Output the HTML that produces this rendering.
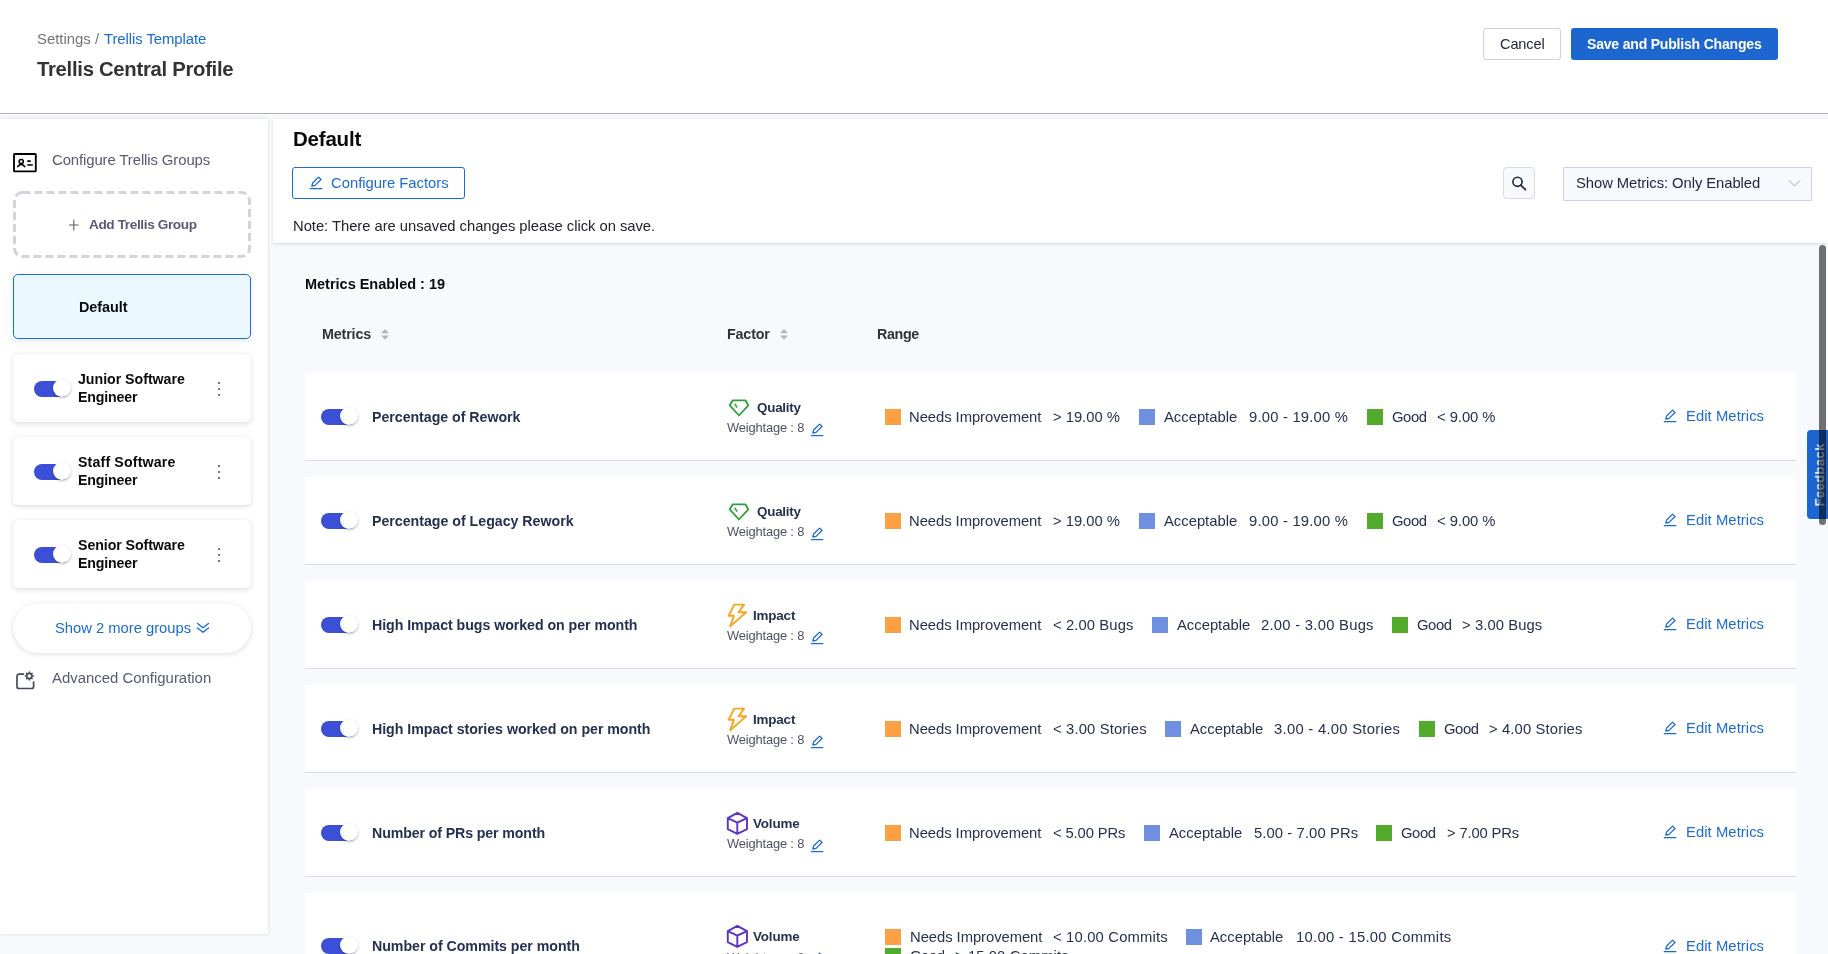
<!DOCTYPE html>
<html><head><meta charset="utf-8">
<style>
*{box-sizing:border-box;margin:0;padding:0}
html,body{width:1828px;height:954px;overflow:hidden;background:#f8f9fc;font-family:"Liberation Sans",sans-serif}
.t{position:absolute;white-space:nowrap;will-change:transform}
.tog{position:absolute;width:36px;height:16px;border-radius:8px;background:#3c4fd7}
.tog::after{content:"";position:absolute;left:18.5px;top:-2px;width:18px;height:18px;border-radius:50%;background:#fff;box-shadow:0 1px 2.5px rgba(0,0,0,.28)}
</style></head><body>
<div style="position:absolute;left:0;top:0;width:1828px;height:113px;background:#fff"></div>
<div style="position:absolute;left:0;top:113px;width:1828px;height:1px;background:#b3b3b3"></div>
<div class="t" style="left:36.6px;top:32.00px;font-size:14.9px;line-height:14.9px;color:#747474;">Settings / </div>
<div class="t" style="left:104.0px;top:32.00px;font-size:14.9px;line-height:14.9px;color:#1a6bd3;letter-spacing:-0.076px;">Trellis Template</div>
<div class="t" style="left:36.9px;top:59.00px;font-size:20.3px;line-height:20.3px;color:#333333;font-weight:bold;letter-spacing:-0.286px;">Trellis Central Profile</div>
<div style="position:absolute;left:1483px;top:28px;width:78px;height:32px;border:1px solid #d0d1da;border-radius:3px;background:#fff"></div>
<div class="t" style="left:1499.8px;top:37.00px;font-size:14.6px;line-height:14.6px;color:#22283d;letter-spacing:-0.141px;">Cancel</div>
<div style="position:absolute;left:1571px;top:28px;width:207px;height:32px;border-radius:3px;background:#1e66cf"></div>
<div class="t" style="left:1587.0px;top:37.00px;font-size:14.0px;line-height:14.0px;color:#fff;font-weight:bold;letter-spacing:-0.185px;">Save and Publish Changes</div>
<div style="position:absolute;left:0;top:119px;width:268px;height:815px;background:#fff;box-shadow:0 0 3px rgba(96,97,112,.22)"></div>
<svg style="position:absolute;left:12px;top:152px" width="26" height="22" viewBox="0 0 26 22"><rect x="2" y="2" width="21.8" height="17.3" rx="0.6" fill="none" stroke="#000" stroke-width="1.85"/><circle cx="9.2" cy="9.5" r="2.1" fill="none" stroke="#000" stroke-width="1.5"/><path d="M5.7 14.6 Q9.2 10.3 12.7 14.6" fill="none" stroke="#000" stroke-width="1.6" stroke-linecap="round"/><path d="M15.3 9.1h3.4M15.3 13h5.5" stroke="#000" stroke-width="1.6"/></svg>
<div class="t" style="left:51.5px;top:153.00px;font-size:14.9px;line-height:14.9px;color:#585a76;letter-spacing:-0.103px;">Configure Trellis Groups</div>
<svg style="position:absolute;left:13px;top:191px" width="238" height="67" viewBox="0 0 238 67"><rect x="1.5" y="1.5" width="235" height="64" rx="8" fill="none" stroke="#d3d5dd" stroke-width="3" stroke-dasharray="8 4"/></svg>
<svg style="position:absolute;left:69px;top:219px" width="10" height="12" viewBox="0 0 10 12"><path d="M4.8 0.5v11M0 6h9.5" stroke="#5a5c75" stroke-width="1.1"/></svg>
<div class="t" style="left:88.6px;top:218.00px;font-size:13.6px;line-height:13.6px;color:#585a76;font-weight:bold;letter-spacing:-0.376px;">Add Trellis Group</div>
<div style="position:absolute;left:13px;top:274px;width:238px;height:65px;background:#ebf8fe;border:1px solid #1e6fd0;border-radius:5px;box-shadow:0 1.5px 5px rgba(96,97,112,.16)"></div>
<div class="t" style="left:78.5px;top:300.00px;font-size:14.4px;line-height:14.4px;color:#0b0b0d;font-weight:bold;letter-spacing:-0.044px;">Default</div>
<div style="position:absolute;left:13px;top:354px;width:238px;height:68px;background:#fff;border-radius:5px;box-shadow:0 0 1px rgba(40,41,61,.08),0 1.5px 5px rgba(96,97,112,.18)"></div>
<div class="tog" style="left:34px;top:381px"></div>
<div class="t" style="left:77.5px;top:372.00px;font-size:14.2px;line-height:14.2px;color:#0b0b0d;font-weight:bold;letter-spacing:-0.027px;">Junior Software</div>
<div class="t" style="left:77.5px;top:390.00px;font-size:14.2px;line-height:14.2px;color:#0b0b0d;font-weight:bold;letter-spacing:-0.158px;">Engineer</div>
<div style="position:absolute;left:218px;top:382px;width:2px;height:2.2px;border-radius:1px;background:#3e4470"></div>
<div style="position:absolute;left:218px;top:388px;width:2px;height:2.2px;border-radius:1px;background:#3e4470"></div>
<div style="position:absolute;left:218px;top:394px;width:2px;height:2.2px;border-radius:1px;background:#3e4470"></div>
<div style="position:absolute;left:13px;top:437px;width:238px;height:68px;background:#fff;border-radius:5px;box-shadow:0 0 1px rgba(40,41,61,.08),0 1.5px 5px rgba(96,97,112,.18)"></div>
<div class="tog" style="left:34px;top:464px"></div>
<div class="t" style="left:77.5px;top:455.00px;font-size:14.2px;line-height:14.2px;color:#0b0b0d;font-weight:bold;letter-spacing:0.145px;">Staff Software</div>
<div class="t" style="left:77.5px;top:473.00px;font-size:14.2px;line-height:14.2px;color:#0b0b0d;font-weight:bold;letter-spacing:-0.158px;">Engineer</div>
<div style="position:absolute;left:218px;top:465px;width:2px;height:2.2px;border-radius:1px;background:#3e4470"></div>
<div style="position:absolute;left:218px;top:471px;width:2px;height:2.2px;border-radius:1px;background:#3e4470"></div>
<div style="position:absolute;left:218px;top:477px;width:2px;height:2.2px;border-radius:1px;background:#3e4470"></div>
<div style="position:absolute;left:13px;top:520px;width:238px;height:68px;background:#fff;border-radius:5px;box-shadow:0 0 1px rgba(40,41,61,.08),0 1.5px 5px rgba(96,97,112,.18)"></div>
<div class="tog" style="left:34px;top:547px"></div>
<div class="t" style="left:77.5px;top:538.00px;font-size:14.2px;line-height:14.2px;color:#0b0b0d;font-weight:bold;letter-spacing:-0.080px;">Senior Software</div>
<div class="t" style="left:77.5px;top:556.00px;font-size:14.2px;line-height:14.2px;color:#0b0b0d;font-weight:bold;letter-spacing:-0.158px;">Engineer</div>
<div style="position:absolute;left:218px;top:548px;width:2px;height:2.2px;border-radius:1px;background:#3e4470"></div>
<div style="position:absolute;left:218px;top:554px;width:2px;height:2.2px;border-radius:1px;background:#3e4470"></div>
<div style="position:absolute;left:218px;top:560px;width:2px;height:2.2px;border-radius:1px;background:#3e4470"></div>
<div style="position:absolute;left:13px;top:603px;width:238px;height:50px;background:#fff;border-radius:25px;box-shadow:0 0 1px rgba(40,41,61,.08),0 1.5px 5px rgba(96,97,112,.18)"></div>
<div class="t" style="left:54.5px;top:621.00px;font-size:14.8px;line-height:14.8px;color:#1a6bd3;letter-spacing:-0.026px;">Show 2 more groups</div>
<svg style="position:absolute;left:196px;top:622px" width="14" height="12" viewBox="0 0 14 12"><path d="M1.5 1.5l5.5 4.3 5.5-4.3M1.5 6l5.5 4.3 5.5-4.3" fill="none" stroke="#1a6bd3" stroke-width="1.4" stroke-linecap="round" stroke-linejoin="round"/></svg>
<svg style="position:absolute;left:15px;top:671px" width="21" height="19" viewBox="0 0 21 19"><path d="M8.5 3.2H4a2 2 0 0 0-2 2V15.5a2 2 0 0 0 2 2h12.6a2 2 0 0 0 2-2V11" fill="none" stroke="#474a5e" stroke-width="1.7" stroke-linecap="round"/><circle cx="14.3" cy="5" r="2.6" fill="none" stroke="#474a5e" stroke-width="1.6"/><path d="M14.3 1v1.2M14.3 7.8V9M10.3 5h1.2M17.1 5h1.2M11.5 2.2l.9.9M16.2 6.9l.9.9M11.5 7.8l.9-.9M16.2 3.1l.9-.9" stroke="#474a5e" stroke-width="1.4" stroke-linecap="round"/></svg>
<div class="t" style="left:51.5px;top:671.00px;font-size:14.9px;line-height:14.9px;color:#585a76;letter-spacing:0.012px;">Advanced Configuration</div>
<div style="position:absolute;left:273px;top:119px;width:1555px;height:124px;background:#fff;box-shadow:0 1px 3px rgba(96,97,112,.2)"></div>
<div class="t" style="left:292.6px;top:129.00px;font-size:20.5px;line-height:20.5px;color:#0b0b0d;font-weight:bold;letter-spacing:-0.212px;">Default</div>
<div style="position:absolute;left:292px;top:167px;width:173px;height:32px;border:1px solid #1a6bd3;border-radius:3px;background:#fff"></div>
<svg style="position:absolute;left:308.5px;top:176px" width="14" height="14" viewBox="0 0 14 14"><path d="M9.6 1.1L12 3.5 6 9.4 2.8 10.2 3.6 7z" fill="none" stroke="#1a6bd3" stroke-width="1.25" stroke-linejoin="round"/><path d="M1.2 12.5H12.8" stroke="#1a6bd3" stroke-width="1.25" stroke-linecap="round"/></svg>
<div class="t" style="left:331.0px;top:176.00px;font-size:14.8px;line-height:14.8px;color:#1a6bd3;">Configure Factors</div>
<div class="t" style="left:292.6px;top:219.00px;font-size:14.8px;line-height:14.8px;color:#22222a;letter-spacing:-0.038px;">Note: There are unsaved changes please click on save.</div>
<div style="position:absolute;left:1503px;top:167px;width:32px;height:32px;border:1px solid #d9dae5;border-radius:4px;background:#f8f9fc"></div>
<svg style="position:absolute;left:1510px;top:175px" width="18" height="16" viewBox="0 0 18 16"><circle cx="7.5" cy="6.8" r="4.6" fill="none" stroke="#22283d" stroke-width="1.6"/><path d="M10.8 10.1l4.6 4.6" stroke="#22283d" stroke-width="1.8" stroke-linecap="round"/></svg>
<div style="position:absolute;left:1563px;top:167px;width:249px;height:34px;border:1px solid #cdd0e0;border-radius:1px;background:#f8f9fe"></div>
<div class="t" style="left:1575.8px;top:176.00px;font-size:14.8px;line-height:14.8px;color:#22283d;letter-spacing:-0.066px;">Show Metrics: Only Enabled</div>
<svg style="position:absolute;left:1788px;top:179px" width="13" height="9" viewBox="0 0 13 9"><path d="M1.2 1.5l5.3 5.6 5.3-5.6" fill="none" stroke="#a3a8b8" stroke-width="1"/></svg>
<div class="t" style="left:305.0px;top:277.00px;font-size:14.5px;line-height:14.5px;color:#0b0b0d;font-weight:bold;letter-spacing:-0.011px;">Metrics Enabled : 19</div>
<div class="t" style="left:321.7px;top:327.00px;font-size:14.3px;line-height:14.3px;color:#333333;font-weight:bold;letter-spacing:-0.153px;">Metrics</div>
<svg style="position:absolute;left:380px;top:328px" width="10" height="13" viewBox="0 0 10 13"><path d="M1 5.3L5 1 9 5.3z M1 7.4L5 11.8 9 7.4z" fill="#b5b5b5"/></svg>
<div class="t" style="left:727.0px;top:327.00px;font-size:14.3px;line-height:14.3px;color:#333333;font-weight:bold;letter-spacing:-0.167px;">Factor</div>
<svg style="position:absolute;left:779px;top:328px" width="10" height="13" viewBox="0 0 10 13"><path d="M1 5.3L5 1 9 5.3z M1 7.4L5 11.8 9 7.4z" fill="#b5b5b5"/></svg>
<div class="t" style="left:877.1px;top:327.00px;font-size:14.3px;line-height:14.3px;color:#333333;font-weight:bold;letter-spacing:-0.361px;">Range</div>
<div style="position:absolute;left:305px;top:372.5px;width:1491px;height:88px;background:#fff;border-bottom:1px solid #d9dae5"></div>
<div class="tog" style="left:321px;top:409.0px"></div>
<div class="t" style="left:372.3px;top:410.00px;font-size:14.2px;line-height:14.2px;color:#263152;font-weight:bold;letter-spacing:-0.033px;">Percentage of Rework</div>
<svg style="position:absolute;left:726px;top:396.5px" width="26" height="22" viewBox="0 0 26 22"><path d="M6.8 3.3H19.4L22.3 8.3 13 18.5 3.7 8.3z" fill="none" stroke="#2ea23a" stroke-width="1.8" stroke-linejoin="round"/><path d="M9.1 7.4l1.6 2.6" stroke="#2ea23a" stroke-width="1.6" stroke-linecap="round"/></svg>
<div class="t" style="left:756.6px;top:401.00px;font-size:13.4px;line-height:13.4px;color:#263152;font-weight:bold;letter-spacing:-0.232px;">Quality</div>
<div class="t" style="left:727.3px;top:422.00px;font-size:12.9px;line-height:12.9px;color:#4f5165;letter-spacing:-0.167px;">Weightage : 8</div>
<svg style="position:absolute;left:810.3px;top:422.5px" width="14" height="14" viewBox="0 0 14 14"><path d="M9.6 1.1L12 3.5 6 9.4 2.8 10.2 3.6 7z" fill="none" stroke="#1a6bd3" stroke-width="1.25" stroke-linejoin="round"/><path d="M1.2 12.5H12.8" stroke="#1a6bd3" stroke-width="1.25" stroke-linecap="round"/></svg>
<div style="position:absolute;left:884.8px;top:409.2px;width:16px;height:16px;background:#fba043"></div>
<div class="t" style="left:909.4px;top:410.00px;font-size:14.8px;line-height:14.8px;color:#263152;letter-spacing:-0.051px;">Needs Improvement</div>
<div class="t" style="left:1053.3px;top:410.00px;font-size:14.8px;line-height:14.8px;color:#263152;letter-spacing:-0.029px;">> 19.00 %</div>
<div style="position:absolute;left:1139.1px;top:409.2px;width:16px;height:16px;background:#6f8fe0"></div>
<div class="t" style="left:1163.7px;top:410.00px;font-size:14.8px;line-height:14.8px;color:#263152;">Acceptable</div>
<div class="t" style="left:1248.7px;top:410.00px;font-size:14.8px;line-height:14.8px;color:#263152;letter-spacing:0.210px;">9.00 - 19.00 %</div>
<div style="position:absolute;left:1367.2px;top:409.2px;width:16px;height:16px;background:#52ab2a"></div>
<div class="t" style="left:1391.8px;top:410.00px;font-size:14.8px;line-height:14.8px;color:#263152;letter-spacing:-0.426px;">Good</div>
<div class="t" style="left:1437.2px;top:410.00px;font-size:14.8px;line-height:14.8px;color:#263152;letter-spacing:-0.054px;">< 9.00 %</div>
<svg style="position:absolute;left:1663px;top:409.0px" width="14" height="14" viewBox="0 0 14 14"><path d="M9.6 1.1L12 3.5 6 9.4 2.8 10.2 3.6 7z" fill="none" stroke="#1a6bd3" stroke-width="1.25" stroke-linejoin="round"/><path d="M1.2 12.5H12.8" stroke="#1a6bd3" stroke-width="1.25" stroke-linecap="round"/></svg>
<div class="t" style="left:1685.6px;top:409.00px;font-size:14.8px;line-height:14.8px;color:#1a6bd3;letter-spacing:0.066px;">Edit Metrics</div>
<div style="position:absolute;left:305px;top:476.5px;width:1491px;height:88px;background:#fff;border-bottom:1px solid #d9dae5"></div>
<div class="tog" style="left:321px;top:513.0px"></div>
<div class="t" style="left:372.3px;top:514.00px;font-size:14.2px;line-height:14.2px;color:#263152;font-weight:bold;letter-spacing:-0.012px;">Percentage of Legacy Rework</div>
<svg style="position:absolute;left:726px;top:500.5px" width="26" height="22" viewBox="0 0 26 22"><path d="M6.8 3.3H19.4L22.3 8.3 13 18.5 3.7 8.3z" fill="none" stroke="#2ea23a" stroke-width="1.8" stroke-linejoin="round"/><path d="M9.1 7.4l1.6 2.6" stroke="#2ea23a" stroke-width="1.6" stroke-linecap="round"/></svg>
<div class="t" style="left:756.6px;top:505.00px;font-size:13.4px;line-height:13.4px;color:#263152;font-weight:bold;letter-spacing:-0.232px;">Quality</div>
<div class="t" style="left:727.3px;top:526.00px;font-size:12.9px;line-height:12.9px;color:#4f5165;letter-spacing:-0.167px;">Weightage : 8</div>
<svg style="position:absolute;left:810.3px;top:526.5px" width="14" height="14" viewBox="0 0 14 14"><path d="M9.6 1.1L12 3.5 6 9.4 2.8 10.2 3.6 7z" fill="none" stroke="#1a6bd3" stroke-width="1.25" stroke-linejoin="round"/><path d="M1.2 12.5H12.8" stroke="#1a6bd3" stroke-width="1.25" stroke-linecap="round"/></svg>
<div style="position:absolute;left:884.8px;top:513.2px;width:16px;height:16px;background:#fba043"></div>
<div class="t" style="left:909.4px;top:514.00px;font-size:14.8px;line-height:14.8px;color:#263152;letter-spacing:-0.051px;">Needs Improvement</div>
<div class="t" style="left:1053.3px;top:514.00px;font-size:14.8px;line-height:14.8px;color:#263152;letter-spacing:-0.029px;">> 19.00 %</div>
<div style="position:absolute;left:1139.1px;top:513.2px;width:16px;height:16px;background:#6f8fe0"></div>
<div class="t" style="left:1163.7px;top:514.00px;font-size:14.8px;line-height:14.8px;color:#263152;">Acceptable</div>
<div class="t" style="left:1248.7px;top:514.00px;font-size:14.8px;line-height:14.8px;color:#263152;letter-spacing:0.210px;">9.00 - 19.00 %</div>
<div style="position:absolute;left:1367.2px;top:513.2px;width:16px;height:16px;background:#52ab2a"></div>
<div class="t" style="left:1391.8px;top:514.00px;font-size:14.8px;line-height:14.8px;color:#263152;letter-spacing:-0.426px;">Good</div>
<div class="t" style="left:1437.2px;top:514.00px;font-size:14.8px;line-height:14.8px;color:#263152;letter-spacing:-0.054px;">< 9.00 %</div>
<svg style="position:absolute;left:1663px;top:513.0px" width="14" height="14" viewBox="0 0 14 14"><path d="M9.6 1.1L12 3.5 6 9.4 2.8 10.2 3.6 7z" fill="none" stroke="#1a6bd3" stroke-width="1.25" stroke-linejoin="round"/><path d="M1.2 12.5H12.8" stroke="#1a6bd3" stroke-width="1.25" stroke-linecap="round"/></svg>
<div class="t" style="left:1685.6px;top:513.00px;font-size:14.8px;line-height:14.8px;color:#1a6bd3;letter-spacing:0.066px;">Edit Metrics</div>
<div style="position:absolute;left:305px;top:580.5px;width:1491px;height:88px;background:#fff;border-bottom:1px solid #d9dae5"></div>
<div class="tog" style="left:321px;top:617.0px"></div>
<div class="t" style="left:372.3px;top:618.00px;font-size:14.2px;line-height:14.2px;color:#263152;font-weight:bold;letter-spacing:-0.048px;">High Impact bugs worked on per month</div>
<svg style="position:absolute;left:726px;top:600.5px" width="24" height="28" viewBox="0 0 24 28"><path d="M8.2 3.6H18.1L12.6 11.2H20.2L4.2 25.4 7.9 14.7H2.6z" fill="none" stroke="#f6a623" stroke-width="1.9" stroke-linejoin="round"/></svg>
<div class="t" style="left:752.8px;top:609.00px;font-size:13.4px;line-height:13.4px;color:#263152;font-weight:bold;letter-spacing:-0.165px;">Impact</div>
<div class="t" style="left:727.3px;top:630.00px;font-size:12.9px;line-height:12.9px;color:#4f5165;letter-spacing:-0.167px;">Weightage : 8</div>
<svg style="position:absolute;left:810.3px;top:630.5px" width="14" height="14" viewBox="0 0 14 14"><path d="M9.6 1.1L12 3.5 6 9.4 2.8 10.2 3.6 7z" fill="none" stroke="#1a6bd3" stroke-width="1.25" stroke-linejoin="round"/><path d="M1.2 12.5H12.8" stroke="#1a6bd3" stroke-width="1.25" stroke-linecap="round"/></svg>
<div style="position:absolute;left:884.8px;top:617.2px;width:16px;height:16px;background:#fba043"></div>
<div class="t" style="left:909.4px;top:618.00px;font-size:14.8px;line-height:14.8px;color:#263152;letter-spacing:-0.051px;">Needs Improvement</div>
<div class="t" style="left:1052.9px;top:618.00px;font-size:14.8px;line-height:14.8px;color:#263152;letter-spacing:0.099px;">< 2.00 Bugs</div>
<div style="position:absolute;left:1152.1px;top:617.2px;width:16px;height:16px;background:#6f8fe0"></div>
<div class="t" style="left:1176.7px;top:618.00px;font-size:14.8px;line-height:14.8px;color:#263152;">Acceptable</div>
<div class="t" style="left:1261.2px;top:618.00px;font-size:14.8px;line-height:14.8px;color:#263152;letter-spacing:0.262px;">2.00 - 3.00 Bugs</div>
<div style="position:absolute;left:1392.3px;top:617.2px;width:16px;height:16px;background:#52ab2a"></div>
<div class="t" style="left:1416.9px;top:618.00px;font-size:14.8px;line-height:14.8px;color:#263152;letter-spacing:-0.426px;">Good</div>
<div class="t" style="left:1462.2px;top:618.00px;font-size:14.8px;line-height:14.8px;color:#263152;letter-spacing:0.081px;">> 3.00 Bugs</div>
<svg style="position:absolute;left:1663px;top:617.0px" width="14" height="14" viewBox="0 0 14 14"><path d="M9.6 1.1L12 3.5 6 9.4 2.8 10.2 3.6 7z" fill="none" stroke="#1a6bd3" stroke-width="1.25" stroke-linejoin="round"/><path d="M1.2 12.5H12.8" stroke="#1a6bd3" stroke-width="1.25" stroke-linecap="round"/></svg>
<div class="t" style="left:1685.6px;top:617.00px;font-size:14.8px;line-height:14.8px;color:#1a6bd3;letter-spacing:0.066px;">Edit Metrics</div>
<div style="position:absolute;left:305px;top:684.5px;width:1491px;height:88px;background:#fff;border-bottom:1px solid #d9dae5"></div>
<div class="tog" style="left:321px;top:721.0px"></div>
<div class="t" style="left:372.3px;top:722.00px;font-size:14.2px;line-height:14.2px;color:#263152;font-weight:bold;letter-spacing:-0.036px;">High Impact stories worked on per month</div>
<svg style="position:absolute;left:726px;top:704.5px" width="24" height="28" viewBox="0 0 24 28"><path d="M8.2 3.6H18.1L12.6 11.2H20.2L4.2 25.4 7.9 14.7H2.6z" fill="none" stroke="#f6a623" stroke-width="1.9" stroke-linejoin="round"/></svg>
<div class="t" style="left:752.8px;top:713.00px;font-size:13.4px;line-height:13.4px;color:#263152;font-weight:bold;letter-spacing:-0.165px;">Impact</div>
<div class="t" style="left:727.3px;top:734.00px;font-size:12.9px;line-height:12.9px;color:#4f5165;letter-spacing:-0.167px;">Weightage : 8</div>
<svg style="position:absolute;left:810.3px;top:734.5px" width="14" height="14" viewBox="0 0 14 14"><path d="M9.6 1.1L12 3.5 6 9.4 2.8 10.2 3.6 7z" fill="none" stroke="#1a6bd3" stroke-width="1.25" stroke-linejoin="round"/><path d="M1.2 12.5H12.8" stroke="#1a6bd3" stroke-width="1.25" stroke-linecap="round"/></svg>
<div style="position:absolute;left:884.8px;top:721.2px;width:16px;height:16px;background:#fba043"></div>
<div class="t" style="left:909.4px;top:722.00px;font-size:14.8px;line-height:14.8px;color:#263152;letter-spacing:-0.051px;">Needs Improvement</div>
<div class="t" style="left:1052.9px;top:722.00px;font-size:14.8px;line-height:14.8px;color:#263152;letter-spacing:0.140px;">< 3.00 Stories</div>
<div style="position:absolute;left:1165px;top:721.2px;width:16px;height:16px;background:#6f8fe0"></div>
<div class="t" style="left:1189.6px;top:722.00px;font-size:14.8px;line-height:14.8px;color:#263152;">Acceptable</div>
<div class="t" style="left:1274.4px;top:722.00px;font-size:14.8px;line-height:14.8px;color:#263152;letter-spacing:0.277px;">3.00 - 4.00 Stories</div>
<div style="position:absolute;left:1419.3px;top:721.2px;width:16px;height:16px;background:#52ab2a"></div>
<div class="t" style="left:1443.9px;top:722.00px;font-size:14.8px;line-height:14.8px;color:#263152;letter-spacing:-0.426px;">Good</div>
<div class="t" style="left:1488.8px;top:722.00px;font-size:14.8px;line-height:14.8px;color:#263152;letter-spacing:0.126px;">> 4.00 Stories</div>
<svg style="position:absolute;left:1663px;top:721.0px" width="14" height="14" viewBox="0 0 14 14"><path d="M9.6 1.1L12 3.5 6 9.4 2.8 10.2 3.6 7z" fill="none" stroke="#1a6bd3" stroke-width="1.25" stroke-linejoin="round"/><path d="M1.2 12.5H12.8" stroke="#1a6bd3" stroke-width="1.25" stroke-linecap="round"/></svg>
<div class="t" style="left:1685.6px;top:721.00px;font-size:14.8px;line-height:14.8px;color:#1a6bd3;letter-spacing:0.066px;">Edit Metrics</div>
<div style="position:absolute;left:305px;top:788.5px;width:1491px;height:88px;background:#fff;border-bottom:1px solid #d9dae5"></div>
<div class="tog" style="left:321px;top:825.0px"></div>
<div class="t" style="left:372.3px;top:826.00px;font-size:14.2px;line-height:14.2px;color:#263152;font-weight:bold;letter-spacing:-0.119px;">Number of PRs per month</div>
<svg style="position:absolute;left:726px;top:808.5px" width="24" height="28" viewBox="0 0 24 28"><path d="M11.3 3.8L21 9.1V20.1L11.3 24.8 1.8 20.1V9.1z M1.8 9.1L11.3 13.6 21 9.1 M11.3 13.6V24.8" fill="none" stroke="#5b34c4" stroke-width="1.9" stroke-linejoin="round"/></svg>
<div class="t" style="left:752.8px;top:817.00px;font-size:13.4px;line-height:13.4px;color:#263152;font-weight:bold;letter-spacing:-0.134px;">Volume</div>
<div class="t" style="left:727.3px;top:838.00px;font-size:12.9px;line-height:12.9px;color:#4f5165;letter-spacing:-0.167px;">Weightage : 8</div>
<svg style="position:absolute;left:810.3px;top:838.5px" width="14" height="14" viewBox="0 0 14 14"><path d="M9.6 1.1L12 3.5 6 9.4 2.8 10.2 3.6 7z" fill="none" stroke="#1a6bd3" stroke-width="1.25" stroke-linejoin="round"/><path d="M1.2 12.5H12.8" stroke="#1a6bd3" stroke-width="1.25" stroke-linecap="round"/></svg>
<div style="position:absolute;left:884.8px;top:825.2px;width:16px;height:16px;background:#fba043"></div>
<div class="t" style="left:909.4px;top:826.00px;font-size:14.8px;line-height:14.8px;color:#263152;letter-spacing:-0.051px;">Needs Improvement</div>
<div class="t" style="left:1052.9px;top:826.00px;font-size:14.8px;line-height:14.8px;color:#263152;letter-spacing:-0.133px;">< 5.00 PRs</div>
<div style="position:absolute;left:1144.2px;top:825.2px;width:16px;height:16px;background:#6f8fe0"></div>
<div class="t" style="left:1168.8px;top:826.00px;font-size:14.8px;line-height:14.8px;color:#263152;">Acceptable</div>
<div class="t" style="left:1253.5px;top:826.00px;font-size:14.8px;line-height:14.8px;color:#263152;letter-spacing:0.091px;">5.00 - 7.00 PRs</div>
<div style="position:absolute;left:1376.1px;top:825.2px;width:16px;height:16px;background:#52ab2a"></div>
<div class="t" style="left:1400.7px;top:826.00px;font-size:14.8px;line-height:14.8px;color:#263152;letter-spacing:-0.426px;">Good</div>
<div class="t" style="left:1446.9px;top:826.00px;font-size:14.8px;line-height:14.8px;color:#263152;letter-spacing:-0.163px;">> 7.00 PRs</div>
<svg style="position:absolute;left:1663px;top:825.0px" width="14" height="14" viewBox="0 0 14 14"><path d="M9.6 1.1L12 3.5 6 9.4 2.8 10.2 3.6 7z" fill="none" stroke="#1a6bd3" stroke-width="1.25" stroke-linejoin="round"/><path d="M1.2 12.5H12.8" stroke="#1a6bd3" stroke-width="1.25" stroke-linecap="round"/></svg>
<div class="t" style="left:1685.6px;top:825.00px;font-size:14.8px;line-height:14.8px;color:#1a6bd3;letter-spacing:0.066px;">Edit Metrics</div>
<div style="position:absolute;left:305px;top:892.5px;width:1491px;height:110px;background:#fff;border-bottom:1px solid #d9dae5"></div>
<div class="tog" style="left:321px;top:938.0px"></div>
<div class="t" style="left:372.3px;top:939.00px;font-size:14.2px;line-height:14.2px;color:#263152;font-weight:bold;letter-spacing:-0.039px;">Number of Commits per month</div>
<svg style="position:absolute;left:726px;top:921.5px" width="24" height="28" viewBox="0 0 24 28"><path d="M11.3 3.8L21 9.1V20.1L11.3 24.8 1.8 20.1V9.1z M1.8 9.1L11.3 13.6 21 9.1 M11.3 13.6V24.8" fill="none" stroke="#5b34c4" stroke-width="1.9" stroke-linejoin="round"/></svg>
<div class="t" style="left:752.8px;top:930.00px;font-size:13.4px;line-height:13.4px;color:#263152;font-weight:bold;letter-spacing:-0.134px;">Volume</div>
<div class="t" style="left:727.3px;top:952.00px;font-size:12.9px;line-height:12.9px;color:#4f5165;letter-spacing:-0.167px;">Weightage : 8</div>
<svg style="position:absolute;left:810.3px;top:951.5px" width="14" height="14" viewBox="0 0 14 14"><path d="M9.6 1.1L12 3.5 6 9.4 2.8 10.2 3.6 7z" fill="none" stroke="#1a6bd3" stroke-width="1.25" stroke-linejoin="round"/><path d="M1.2 12.5H12.8" stroke="#1a6bd3" stroke-width="1.25" stroke-linecap="round"/></svg>
<div style="position:absolute;left:884.8px;top:929.1px;width:16px;height:16px;background:#fba043"></div>
<div class="t" style="left:909.6px;top:930.00px;font-size:14.8px;line-height:14.8px;color:#263152;letter-spacing:-0.051px;">Needs Improvement</div>
<div class="t" style="left:1053.1px;top:930.00px;font-size:14.8px;line-height:14.8px;color:#263152;letter-spacing:0.175px;">< 10.00 Commits</div>
<div style="position:absolute;left:1186px;top:929.1px;width:16px;height:16px;background:#6f8fe0"></div>
<div class="t" style="left:1210.3px;top:930.00px;font-size:14.8px;line-height:14.8px;color:#263152;">Acceptable</div>
<div class="t" style="left:1296.0px;top:930.00px;font-size:14.8px;line-height:14.8px;color:#263152;letter-spacing:0.275px;">10.00 - 15.00 Commits</div>
<div style="position:absolute;left:884.8px;top:947.8px;width:16px;height:16px;background:#52ab2a"></div>
<div class="t" style="left:909.6px;top:949.00px;font-size:14.8px;line-height:14.8px;color:#263152;letter-spacing:-0.426px;">Good</div>
<div class="t" style="left:955.0px;top:949.00px;font-size:14.8px;line-height:14.8px;color:#263152;letter-spacing:0.095px;">> 15.00 Commits</div>
<svg style="position:absolute;left:1663px;top:938.5px" width="14" height="14" viewBox="0 0 14 14"><path d="M9.6 1.1L12 3.5 6 9.4 2.8 10.2 3.6 7z" fill="none" stroke="#1a6bd3" stroke-width="1.25" stroke-linejoin="round"/><path d="M1.2 12.5H12.8" stroke="#1a6bd3" stroke-width="1.25" stroke-linecap="round"/></svg>
<div class="t" style="left:1685.6px;top:939.00px;font-size:14.8px;line-height:14.8px;color:#1a6bd3;letter-spacing:0.066px;">Edit Metrics</div>
<div style="position:absolute;left:1807px;top:430px;width:24px;height:89px;background:#1e66cf;border-radius:4px 0 0 4px"></div>
<div style="position:absolute;left:1774.8px;top:464.75px;width:89px;height:20px;transform:rotate(-90deg);color:rgba(255,255,255,.9);font-size:13.5px;font-weight:bold;line-height:20px;text-align:center;letter-spacing:0.1px">Feedback</div>
<div style="position:absolute;left:1819px;top:245px;width:7px;height:280px;border-radius:4px;background:rgba(0,0,0,.55)"></div>
</body></html>
